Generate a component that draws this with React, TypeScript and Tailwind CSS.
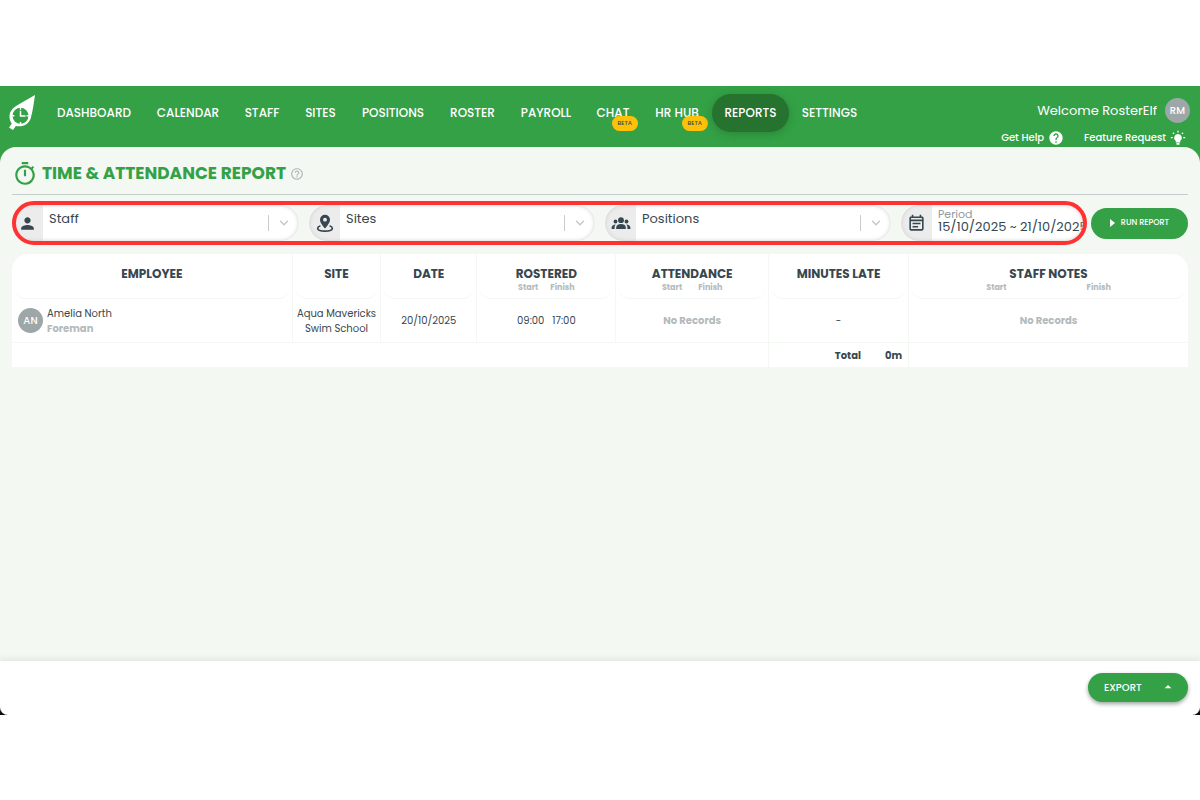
import type { ReactNode } from 'react'
import {
  MdArrowDropUp,
  MdHelp,
  MdHelpOutline,
  MdOutlineEventNote,
  MdOutlineTimer,
  MdPerson,
} from 'react-icons/md'
import { ChevronDown } from 'lucide-react'

interface NavItem {
  label: string
  active?: boolean
  beta?: boolean
}

const navItems: NavItem[] = [
  { label: 'DASHBOARD' },
  { label: 'CALENDAR' },
  { label: 'STAFF' },
  { label: 'SITES' },
  { label: 'POSITIONS' },
  { label: 'ROSTER' },
  { label: 'PAYROLL' },
  { label: 'CHAT', beta: true },
  { label: 'HR HUB', beta: true },
  { label: 'REPORTS', active: true },
  { label: 'SETTINGS' },
]

// leaf with a clock face cut out of it
function Logo() {
  return (
    <svg viewBox="0 0 28 36" className="h-9 w-7" aria-hidden="true">
      <path
        d="M27 1 L10.5 10.5 C3.5 14.5 1 18.5 1.600 24 C1.900 26.5 2.5 28 3.8 29.4 L1 33.4 L5 36 L7.8 32 C14.5 33.4 20.8 30.5 22.8 24 C24.8 17 25.8 9 27 1 Z"
        fill="#fff"
      />
      <circle cx="12.5" cy="21.800" r="8" fill="#34a146" />
      <path
        d="M12.5 13.500v2.200M12.5 27.900v2.200M4.200 21.800h2.200M18.600 21.800h2.200"
        stroke="#fff"
        strokeWidth="1.400"
      />
      <path d="M12.5 16.800V22H17.500" fill="none" stroke="#fff" strokeWidth="1.500" />
    </svg>
  )
}

function PinIcon() {
  return (
    <svg viewBox="0 0 24 24" className="size-5" fill="currentColor" aria-hidden="true">
      <path d="M12 2a6 6 0 0 0-6 6c0 4.3 6 10.500 6 10.500S18 12.300 18 8a6 6 0 0 0-6-6Zm0 8.300A2.300 2.300 0 1 1 12 5.700a2.300 2.300 0 0 1 0 4.600Z" />
      <path
        d="M6.500 15.200C4.300 16 3.200 17 3.200 18.200c0 2.100 3.800 3.500 8.800 3.500s8.800-1.400 8.800-3.500c0-1.200-1.100-2.200-3.300-3"
        fill="none"
        stroke="currentColor"
        strokeWidth="2"
      />
    </svg>
  )
}

function PeopleIcon() {
  return (
    <svg viewBox="0 0 20 14" className="h-3.5 w-5" fill="currentColor" aria-hidden="true">
      <circle cx="10" cy="4.200" r="2.900" />
      <circle cx="4.500" cy="5.500" r="1.900" />
      <circle cx="15.500" cy="5.500" r="1.900" />
      <path d="M5.200 13v-1.600C5.200 9.200 7.500 8 10 8s4.800 1.200 4.800 3.400V13Z" />
      <path d="M.6 13v-1.300c0-1.800 1.500-3.100 4.300-3.200-.9.800-1.300 1.700-1.300 2.900V13ZM19.400 13v-1.300c0-1.800-1.500-3.100-4.300-3.200.9.800 1.300 1.700 1.300 2.900V13Z" />
    </svg>
  )
}

function BulbIcon() {
  return (
    <svg viewBox="0 0 16 16" className="size-4" fill="currentColor" aria-hidden="true">
      <path d="M8 4a3.900 3.900 0 0 0-2.200 7.100V12.500h4.400v-1.400A3.900 3.900 0 0 0 8 4ZM6.500 13h3v1.800h-3z" />
      <path
        d="M8 .8v1.700M2.900 2.700l1.200 1.200M13.100 2.700l-1.200 1.200M.8 7.700h1.900M13.300 7.700h1.900"
        stroke="currentColor"
        strokeWidth="1.300"
      />
    </svg>
  )
}

function Field({ icon, children }: { icon: ReactNode; children: ReactNode }) {
  return (
    <div className="relative flex h-9 min-w-0 overflow-hidden rounded-full bg-white">
      <div className="flex w-[31px] shrink-0 items-center justify-center bg-[#ececec] text-[#37474f]">{icon}</div>
      <div className="relative min-w-0 flex-1">{children}</div>
      <div className="pointer-events-none absolute inset-0 rounded-full shadow-[inset_0_0_4px_#c8ccc8]" />
    </div>
  )
}

function SelectField({ label, icon }: { label: string; icon: ReactNode }) {
  return (
    <Field icon={icon}>
      <select
        aria-label={label}
        className="h-full w-full appearance-none bg-transparent pr-10 pb-2 pl-1.5 text-[13px] text-[#37474f] outline-none"
      >
        <option>{label}</option>
      </select>
      <span className="pointer-events-none absolute inset-y-0 right-2 flex items-center gap-2">
        <span className="h-4 w-px bg-[#cccccc]" />
        <ChevronDown className="size-3.5 text-[#c4c8c8]" strokeWidth={2.5} />
      </span>
    </Field>
  )
}

function HeadCell({ title, sub, gap }: { title: string; sub?: boolean; gap?: string }) {
  return (
    <th scope="col" className="h-[45px] border-l border-[#f3f8f3] p-0 first:border-l-0">
      <div className="mx-0.5 h-[45px] rounded-b-xl border-b border-[#f3f6f3] pt-2.5">
        <div className="text-[12px] leading-5 font-bold">{title}</div>
        {sub && (
          <div className={`flex justify-center text-[8px] leading-2 font-bold text-[#b3baba] ${gap}`}>
            <span>Start</span>
            <span>Finish</span>
          </div>
        )}
      </div>
    </th>
  )
}

export default function App() {
  const cell = 'border-l border-t border-[#f3f8f3] p-0 first:border-l-0'

  return (
    <div className="flex min-h-screen flex-col bg-white pt-[86px] pb-[85px] font-['Poppins','Inter',sans-serif] text-[#37474f]">
      <div className="flex flex-1 flex-col bg-black">
        <header className="-mb-4 flex h-[77px] justify-between bg-[#34a146] pr-2.5 pl-2 text-white">
          <div className="flex items-start gap-2 pt-2">
            <a href="#home" aria-label="RosterElf">
              <Logo />
            </a>
            <nav className="grid grid-cols-[100px_88px_60px_57px_88px_71px_76px_58px_70px_77px_81px]">
              {navItems.map((item) => (
                <a
                  key={item.label}
                  href="#nav"
                  className={`relative flex h-[38px] items-center justify-center rounded-full text-[12px] font-medium whitespace-nowrap ${
                    item.active ? 'bg-[#26722f] shadow-[0_2px_8px_#2a8538]' : ''
                  }`}
                >
                  {item.label}
                  {item.beta && (
                    <span className="absolute top-[22px] right-1 rounded-full bg-[#ffc107] px-1.5 text-[6px] leading-[15px] font-medium text-[#37474f]">
                      BETA
                    </span>
                  )}
                </a>
              ))}
            </nav>
          </div>
          <div className="flex flex-col items-end pt-3">
            <div className="flex items-center gap-2 text-[13px]">
              Welcome RosterElf
              <span className="flex size-[25px] items-center justify-center rounded-full bg-[#9ea7a7] text-[10px] font-medium tracking-wide">
                RM
              </span>
            </div>
            <div className="flex items-center gap-5 pt-1.5 pr-1 text-[10px] leading-[18px] font-medium">
              <a href="#help" className="flex items-center gap-1">
                Get Help <MdHelp className="size-4" />
              </a>
              <a href="#feature" className="flex items-center gap-1">
                Feature Request <BulbIcon />
              </a>
            </div>
          </div>
        </header>

        <main className="flex-1 rounded-t-2xl bg-[#f3f8f3] px-3">
          <div className="flex h-12 items-center gap-1 border-b border-[#c5cccc] pt-1.5">
            <MdOutlineTimer className="size-[26px] text-[#34a146]" />
            <h1 className="text-[17px] font-bold text-[#34a146]">TIME &amp; ATTENDANCE REPORT</h1>
            <MdHelpOutline className="size-3.5 text-[#b0b6b6]" />
          </div>

          <div className="flex items-center gap-1 pt-1.5">
            <div className="relative min-w-0 flex-1 py-1 pr-1">
              <div className="grid grid-cols-[287fr_286fr_286fr_182fr] gap-2.5">
                <SelectField label="Staff" icon={<MdPerson className="size-[19px]" />} />
                <SelectField label="Sites" icon={<PinIcon />} />
                <SelectField label="Positions" icon={<PeopleIcon />} />
                <Field icon={<MdOutlineEventNote className="size-[19px]" />}>
                  <label htmlFor="period" className="block pt-1 pl-1.5 text-[11px] leading-2.5 text-[#90999c]">
                    Period
                  </label>
                  <input
                    id="period"
                    readOnly
                    value="15/10/2025 ~ 21/10/2025"
                    className="block w-full bg-transparent pl-1.5 text-[13px] leading-4 outline-none"
                  />
                </Field>
              </div>
              <div className="pointer-events-none absolute inset-0 rounded-full border-4 border-[#ff3131]" />
            </div>
            <button
              type="button"
              className="flex h-[31px] w-[97px] items-center justify-center gap-1.5 rounded-full bg-[#34a146] text-[8px] font-medium text-white"
            >
              <svg viewBox="0 0 5 8" className="h-2 w-[5px]" fill="currentColor" aria-hidden="true">
                <path d="M0 0l5 4-5 4z" />
              </svg>
              RUN REPORT
            </button>
          </div>

          <table className="mt-[9px] w-full table-fixed border-separate border-spacing-0 overflow-hidden rounded-t-2xl bg-white text-center text-[10px]">
            <colgroup>
              <col className="w-[23.8%]" />
              <col className="w-[7.5%]" />
              <col className="w-[8.2%]" />
              <col className="w-[11.8%]" />
              <col className="w-[13%]" />
              <col className="w-[11.9%]" />
              <col className="w-[23.8%]" />
            </colgroup>
            <thead>
              <tr>
                <HeadCell title="EMPLOYEE" />
                <HeadCell title="SITE" />
                <HeadCell title="DATE" />
                <HeadCell title="ROSTERED" sub gap="gap-3" />
                <HeadCell title="ATTENDANCE" sub gap="gap-4" />
                <HeadCell title="MINUTES LATE" />
                <HeadCell title="STAFF NOTES" sub gap="gap-20" />
              </tr>
            </thead>
            <tbody>
              <tr className="h-[43px]">
                <td className="p-0">
                  <div className="flex items-center gap-1 pl-1.5 text-left leading-[15px]">
                    <span className="flex size-[25px] items-center justify-center rounded-full bg-[#9ea7a7] font-medium tracking-wide text-white">
                      AN
                    </span>
                    <div>
                      <div>Amelia North</div>
                      <div className="font-bold text-[#b3baba]">Foreman</div>
                    </div>
                  </div>
                </td>
                <td className="border-l border-[#f3f8f3] p-0 leading-[15px]">
                  Aqua Mavericks
                  <br />
                  Swim School
                </td>
                <td className="border-l border-[#f3f8f3] p-0">20/10/2025</td>
                <td className="border-l border-[#f3f8f3] p-0">
                  <div className="flex justify-center gap-2">
                    <span>09:00</span>
                    <span>17:00</span>
                  </div>
                </td>
                <td className="border-l border-[#f3f8f3] p-0 font-bold text-[#b3baba]">No Records</td>
                <td className="border-l border-[#f3f8f3] p-0">-</td>
                <td className="border-l border-[#f3f8f3] p-0 font-bold text-[#b3baba]">No Records</td>
              </tr>
              <tr className="h-[25px]">
                <td colSpan={5} className={cell} />
                <td className={cell}>
                  <div className="flex justify-end gap-6 pr-1.5 font-bold">
                    <span>Total</span>
                    <span>0m</span>
                  </div>
                </td>
                <td className={cell} />
              </tr>
            </tbody>
          </table>
        </main>

        <footer className="flex h-[54px] items-center justify-end rounded-b-lg bg-white px-3 pb-0.5 shadow-[0_-3px_5px_#e3e9e3]">
          <button
            type="button"
            className="flex h-[29px] w-[100px] items-center justify-between rounded-full bg-[#34a146] pr-3 pl-4 text-[10px] font-medium text-white shadow-[0_2px_4px_#9aa39b]"
          >
            EXPORT
            <MdArrowDropUp className="size-4" />
          </button>
        </footer>
      </div>
    </div>
  )
}
